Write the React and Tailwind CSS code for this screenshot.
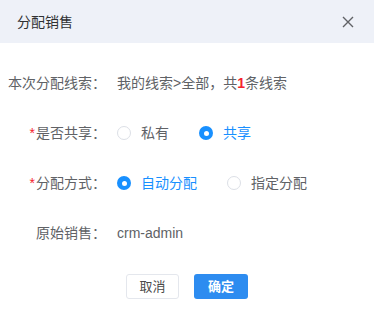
import React from 'react';

const Radio = ({ checked, label }) => (
  <label className="flex items-center mr-[30px] cursor-pointer">
    {checked ? (
      <span className="w-[14px] h-[14px] rounded-full bg-[#1890ff] flex items-center justify-center">
        <span className="w-[5px] h-[5px] rounded-full bg-white" />
      </span>
    ) : (
      <span className="w-[14px] h-[14px] rounded-full border border-[#dcdfe6] bg-white" />
    )}
    <span className={`pl-[10px] ${checked ? 'text-[#1890ff]' : 'text-[#606266]'}`}>{label}</span>
  </label>
);

const Row = ({ label, required, children }) => (
  <div className="h-[50px] flex items-center">
    <div className="w-[117px] pr-[11px] text-right text-[#606266] whitespace-nowrap">
      {required && <span className="text-[#f5222d] mr-[1px]">*</span>}
      {label}
    </div>
    <div className="flex items-center text-[#606266]">{children}</div>
  </div>
);

export default function App() {
  return (
    <div
      className="w-[374px] h-[324px] bg-white text-[14px] leading-none"
      style={{ fontFamily: '"Liberation Sans", "Noto Sans CJK SC", sans-serif' }}
    >
      <div className="h-[43px] bg-[#eef1f8] flex items-center justify-between pl-[17px] pr-[20px]">
        <span className="text-[14px] text-[#303133]">分配销售</span>
        <svg width="12" height="12" viewBox="0 0 12 12" className="text-[#606266]">
          <path d="M1 1L11 11M11 1L1 11" stroke="currentColor" strokeWidth="1.4" />
        </svg>
      </div>

      <div className="pt-[15px]">
        <Row label="本次分配线索：">
          <span>
            我的线索&gt;全部，共<span className="text-[#f5222d] font-bold">1</span>条线索
          </span>
        </Row>
        <Row label="是否共享：" required>
          <Radio label="私有" />
          <Radio label="共享" checked />
        </Row>
        <Row label="分配方式：" required>
          <Radio label="自动分配" checked />
          <Radio label="指定分配" />
        </Row>
        <Row label="原始销售：">
          <span>crm-admin</span>
        </Row>
      </div>

      <div className="pt-[16px] flex justify-center gap-[15px]">
        <button className="w-[53px] h-[25px] border border-[#e4e7ed] rounded-[3px] bg-white text-[13px] text-[#4a4a4a]">
          取消
        </button>
        <button className="w-[54px] h-[25px] rounded-[3px] bg-[#2d8cf0] text-[13px] font-bold text-white">
          确定
        </button>
      </div>
    </div>
  );
}
